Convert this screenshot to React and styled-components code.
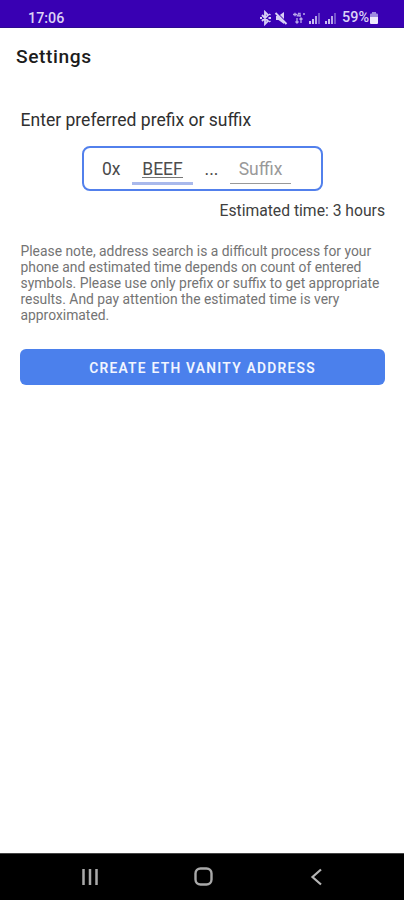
import React from "react";
import styled, { createGlobalStyle } from "styled-components";

const GlobalStyle = createGlobalStyle`
  * { box-sizing: border-box; }
  body { margin: 0; background: #fff; font-family: Roboto, "Liberation Sans", sans-serif; }
`;

const Screen = styled.div`
  width: 404px;
  height: 900px;
  display: flex;
  flex-direction: column;
  background: #fff;
  overflow: hidden;
`;

const StatusBar = styled.header`
  height: 28px;
  flex: none;
  display: flex;
  align-items: flex-end;
  justify-content: space-between;
  padding: 0 25px 0 28px;
  background: #3900b3;
  border-bottom: 1px solid #2d0b91;
  color: #dcd2f6;
`;

const Clock = styled.span`
  font-size: 14.3px;
  font-weight: 500;
  line-height: 18px;
`;

const StatusIcons = styled.div`
  display: flex;
  align-items: center;
  height: 19px;
`;

const StatusSvg = styled.svg`
  display: block;
  flex: none;
`;

const Battery = styled.span`
  margin: 0 0 0 3px;
  padding-top: 1px;
  font-size: 14.4px;
  font-weight: 500;
  line-height: 18px;
`;

const AppBar = styled.h1`
  flex: none;
  height: 58px;
  margin: 0;
  padding-left: 16px;
  font-size: 19.2px;
  font-weight: 500;
  line-height: 58px;
  letter-spacing: 0.6px;
  color: #1c1c1c;
`;

const Content = styled.main`
  flex: 1;
  display: flex;
  flex-direction: column;
  padding: 22px 19px 0 20px;
`;

const Label = styled.label`
  padding-left: 0.5px;
  font-size: 17.55px;
  line-height: 25px;
  color: #303030;
`;

const AddressBox = styled.div`
  align-self: center;
  width: 241px;
  height: 45px;
  margin: 13px 0 0 0;
  padding: 0 30px 0 18px;
  display: flex;
  align-items: flex-start;
  border: 2px solid #5280ec;
  border-radius: 8px;
  font-size: 17.5px;
  color: #4a4a4a;
`;

const Fixed = styled.span`
  width: ${(p) => p.$width}px;
  padding-top: 10px;
  line-height: 23px;
  text-align: ${(p) => p.$align || "left"};
`;

const Field = styled.div`
  width: 61px;
  height: ${(p) => (p.$active ? 37 : 36)}px;
  padding-top: 10px;
  line-height: 23px;
  text-align: center;
  color: ${(p) => (p.$active ? "#4d4d4d" : "#999")};
  border-bottom: ${(p) => (p.$active ? "3px solid #a9b9ec" : "1px solid #999")};
`;

const Typed = styled.span`
  display: inline-block;
  height: 20px;
  line-height: 23px;
  border-bottom: 1px solid #777;
`;

const Estimate = styled.p`
  margin: 9px 0 0;
  text-align: right;
  font-size: 15.7px;
  line-height: 22px;
  color: #404040;
`;

const Note = styled.p`
  margin: 21px 0 0;
  padding-left: 0.5px;
  font-size: 13.87px;
  line-height: 16.1px;
  color: #747474;
  white-space: nowrap;
`;

const CreateButton = styled.button`
  flex: none;
  height: 36px;
  margin: 26px 0 0;
  padding: 1px 0 0;
  border: 0;
  border-radius: 6px;
  background: #4b80ec;
  color: #f1f5ff;
  font-family: inherit;
  font-size: 13.8px;
  font-weight: 600;
  letter-spacing: 1.25px;
`;

const NavBar = styled.nav`
  flex: none;
  height: 47px;
  display: flex;
  align-items: center;
  justify-content: space-between;
  padding: 0 76px 0 79px;
  background: #000;
  border-top: 1px solid #444;
`;

function StatusGlyphs() {
  return (
    <StatusSvg width="80" height="16" viewBox="0 0 80 16" fill="none" stroke="#d8cff5">
      <path d="M3 5l6 6-3 3V2l3 3-6 6M1 8h2M9.500 8h2.500M10.400 5l.8-1M10.400 11l.8 1" strokeWidth="1.800" />
      <path d="M17 6h2.500L25 2v12L19.500 10H17z" fill="#d8cff5" stroke="none" />
      <path d="M17.500 2.500l11 11" stroke="#3900b3" strokeWidth="1.400" />
      <path d="M16.500 3l11 11" strokeWidth="1.900" />
      <path d="M34 4.500h4M36 2.800v3.500M40 2.800l-1.500 3h3.500M41 2.800v4M44 4h2M38 8v5M36.500 11.500L38 13l1.500-1.500M42 13V8M40.500 9.500L42 8l1.500 1.500" stroke="#b9a8ea" strokeWidth="1.300" />
      {[50, 66].map((x) => (
        <g key={x} stroke="none">
          <path d={`M${x} 11h2v3h-2zM${x + 3} 9h2v5h-2z`} fill="#cbbff0" />
          <path d={`M${x + 6} 6h2v8h-2z`} fill="#b7a5e9" />
          <path d={`M${x + 9} 3h2v11h-2z`} fill="#7452ca" />
        </g>
      ))}
    </StatusSvg>
  );
}

function BatteryIcon() {
  return (
    <StatusSvg width="10" height="14" viewBox="0 0 10 14">
      <path d="M3 1h4v1.500h1a1 1 0 011 1V6H1V3.500a1 1 0 011-1h1z" fill="#9f8be0" />
      <path d="M1 6h8v6a1 1 0 01-1 1H2a1 1 0 01-1-1z" fill="#eee9fc" />
    </StatusSvg>
  );
}

export default function App() {
  return (
    <>
      <GlobalStyle />
      <Screen>
        <StatusBar>
          <Clock>17:06</Clock>
          <StatusIcons>
            <StatusGlyphs />
            <Battery>59%</Battery>
            <BatteryIcon />
          </StatusIcons>
        </StatusBar>
        <AppBar>Settings</AppBar>
        <Content>
          <Label>Enter preferred prefix or suffix</Label>
          <AddressBox>
            <Fixed $width={30}>0x</Fixed>
            <Field $active><Typed>BEEF</Typed></Field>
            <Fixed $width={37} $align="center">...</Fixed>
            <Field>Suffix</Field>
          </AddressBox>
          <Estimate>Estimated time: 3 hours</Estimate>
          <Note>
            Please note, address search is a difficult process for your<br />
            phone and estimated time depends on count of entered<br />
            symbols. Please use only prefix or suffix to get appropriate<br />
            results. And pay attention the estimated time is very<br />
            approximated.
          </Note>
          <CreateButton>CREATE ETH VANITY ADDRESS</CreateButton>
        </Content>
        <NavBar>
          <StatusSvg width="22" height="22" viewBox="0 0 22 22" stroke="#a9a9a9" strokeWidth="2.500">
            <path d="M4.500 3v16M11 3v16M17.500 3v16" />
          </StatusSvg>
          <StatusSvg width="22" height="22" viewBox="0 0 22 22" fill="none" stroke="#a9a9a9" strokeWidth="2.400">
            <rect x="2.500" y="2.500" width="16" height="16" rx="5" />
          </StatusSvg>
          <StatusSvg width="22" height="22" viewBox="0 0 22 22" fill="none" stroke="#b5b5b5" strokeWidth="2.200">
            <path d="M15 3.500L6.500 11l8.500 7.500" />
          </StatusSvg>
        </NavBar>
      </Screen>
    </>
  );
}
